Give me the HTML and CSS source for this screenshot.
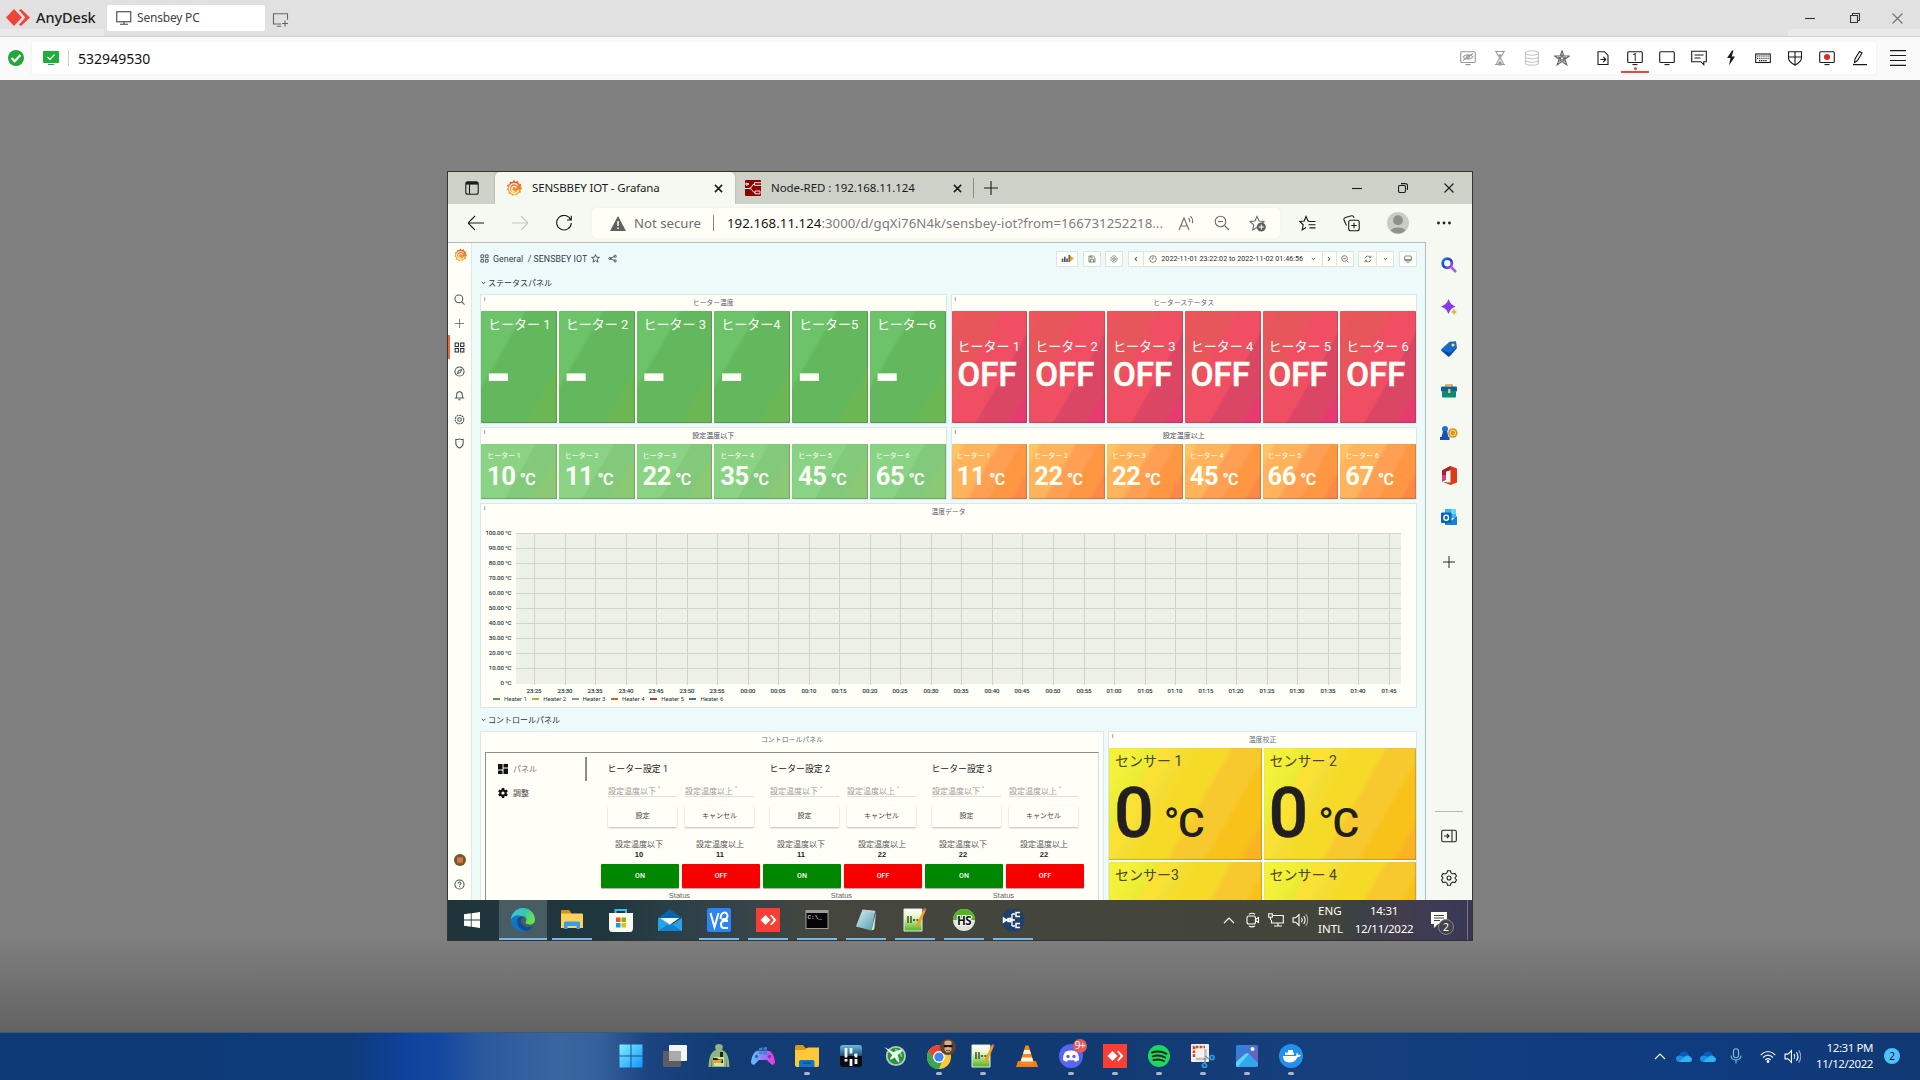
FILE: index.html
```
<!DOCTYPE html>
<html lang="en">
<head>
<meta charset="utf-8">
<title>AnyDesk</title>
<link rel="stylesheet" href="styles.css">
</head>
<body>
<svg class="sprite" aria-hidden="true">
  <defs>
    <linearGradient id="g-edge" x1="0" y1="0" x2="1" y2=".4"><stop offset="0" stop-color="#35c1f1"/><stop offset=".6" stop-color="#35c9b0"/><stop offset="1" stop-color="#6be14c"/></linearGradient>
    <linearGradient id="g-graf" x1="0" y1="0" x2="0" y2="1"><stop offset="0" stop-color="#e8552c"/><stop offset="1" stop-color="#fbb61c"/></linearGradient>
    <linearGradient id="g-win" x1="0" y1="0" x2="1" y2="1"><stop offset="0" stop-color="#7df0ff"/><stop offset="1" stop-color="#0f95ff"/></linearGradient>
    <linearGradient id="g-pad" x1="0" y1="0" x2="1" y2="0"><stop offset="0" stop-color="#5cc4ff"/><stop offset=".6" stop-color="#a070f5"/><stop offset="1" stop-color="#ff2fd8"/></linearGradient>
    <linearGradient id="g-photo" x1="0" y1="0" x2="1" y2="1"><stop offset="0" stop-color="#1f8be0"/><stop offset="1" stop-color="#8c4fb4"/></linearGradient>
    <linearGradient id="g-mag" x1="0" y1="0" x2="1" y2="1"><stop offset="0" stop-color="#1f7de0"/><stop offset=".5" stop-color="#1a3fc4"/><stop offset="1" stop-color="#b25cf0"/></linearGradient>
    <linearGradient id="g-npp" x1="0" y1="0" x2="0" y2="1"><stop offset="0" stop-color="#fff"/><stop offset=".35" stop-color="#e8f7c8"/><stop offset="1" stop-color="#4db51d"/></linearGradient>
    <linearGradient id="g-glass" x1="0" y1="0" x2="0" y2="1"><stop offset="0" stop-color="#6dbbe0"/><stop offset=".5" stop-color="#1c4d6c"/><stop offset=".52" stop-color="#05080b"/><stop offset="1" stop-color="#0a1016"/></linearGradient>
    <linearGradient id="g-pad2" x1="0" y1="0" x2="1" y2="1"><stop offset="0" stop-color="#d8eef2"/><stop offset="1" stop-color="#4f9cb4"/></linearGradient>
  </defs>
  <symbol id="i-min" viewBox="0 0 10 10"><path d="M0 5.500h10" class="s"/></symbol>
  <symbol id="i-x" viewBox="0 0 10 10"><path d="M.5.5l9 9M9.500.5l-9 9" class="s"/></symbol>
  <symbol id="i-xb" viewBox="0 0 10 10"><path d="M1 1l8 8M9 1l-8 8" fill="none" stroke="currentColor" stroke-width="1.700"/></symbol>
  <symbol id="i-restore" viewBox="0 0 10 10"><path d="M.5 2.500h7v7h-7zM2.500 2.500v-2h7v7h-2" class="s"/></symbol>
  <symbol id="i-restore-r" viewBox="0 0 10 10"><rect x=".5" y="2.500" width="7" height="7" rx="1.500" class="s"/><path d="M3 .6h4.500a2 2 0 0 1 2 2V7" class="s"/></symbol>
  <symbol id="i-plus" viewBox="0 0 14 14"><path d="M7 0v14M0 7h14" class="s"/></symbol>
  <symbol id="i-chev" viewBox="0 0 12 8"><path d="M1 7l5-5 5 5" class="s"/></symbol>
  <symbol id="i-chev-d" viewBox="0 0 6 4"><path d="M1 .8L3 2.800 5 .8" class="s"/></symbol>
  <symbol id="i-chev-l" viewBox="0 0 4 6"><path d="M3 1L1.200 3 3 5" class="s"/></symbol>
  <symbol id="i-chev-r" viewBox="0 0 4 6"><path d="M1 1l1.800 2L1 5" class="s"/></symbol>
  <symbol id="i-any" viewBox="0 0 24 17"><path d="M8 0l8 8.500-8 8.500-8-8.500z" fill="currentColor"/><path d="M13 1.200l2-1.200 9 8.500-9 8.500-2-1.200 6.300-7.300z" fill="currentColor"/></symbol>
  <symbol id="i-pc" viewBox="0 0 16 14"><rect x=".75" y=".75" width="14" height="10" class="s"/><path d="M8 11v2M4 13.200h8" class="s"/></symbol>
  <symbol id="i-pc-add" viewBox="0 0 17 14"><path d="M9 11H1.500V.7h14v6M5 13.300h4M13 7.500v6M10 10.500h6" class="s"/></symbol>
  <symbol id="i-mon" viewBox="0 0 16 16"><rect x=".7" y="1.700" width="14.600" height="10.800" rx="1" class="s"/><path d="M5.500 14.600h5" class="s"/></symbol>
  <symbol id="i-eye" viewBox="0 0 16 16"><rect x=".7" y="1.700" width="14.600" height="10.800" rx="1" class="s"/><path d="M5.500 14.600h5M3 7c2.500-3 7.500-3 10 0-2.500 3-7.500 3-10 0M3 10.500L13 3.500" class="s"/><circle cx="8" cy="7" r="1.500" class="s"/></symbol>
  <symbol id="i-hour" viewBox="0 0 16 16"><path d="M3 1.500h10M3 14.500h10M4.500 1.500c0 4 3 4.500 3 6.500s-3 3-3 6.500M11.500 1.500c0 4-3 4.500-3 6.500s3 3 3 6.500" class="s"/><path d="M6 4.500h4l-2 2.500zM5.500 14l2.500-3.500 2.500 3.500z" fill="currentColor"/><circle cx="8" cy="16" r="1.500" fill="#f7b5b0"/></symbol>
  <symbol id="i-db" viewBox="0 0 16 16"><ellipse cx="8" cy="3" rx="6.500" ry="2.200" class="s"/><path d="M1.500 3v10c0 3 13 3 13 0V3M1.500 6.500c0 3 13 3 13 0M1.500 10c0 3 13 3 13 0" class="s"/><circle cx="8" cy="16" r="1.500" fill="#f9c5c0"/></symbol>
  <symbol id="i-star" viewBox="0 0 16 16"><path d="M8 1l1.900 4.700 5.100.3-4 3.300 1.400 5.200L8 11.700l-4.400 2.800L5 9.300 1 6l5.100-.3z" fill="none" stroke="currentColor" stroke-width="1.500"/></symbol>
  <symbol id="i-star2" viewBox="0 0 16 16"><path d="M8 .8l1.800 5.200h5.700l-4.600 3.300 1.900 5.600L8 11.500l-4.800 3.400 1.900-5.600L.5 6h5.700zM8 5l.9 2.300 2.200.1-1.700 1.300.6 2.200-2-1.300-2 1.300.6-2.200-1.700-1.300 2.200-.1z" class="s"/></symbol>
  <symbol id="i-file" viewBox="0 0 16 16"><path d="M3 1.700h6.500L13 5.500v9H3zM5.500 9.500h5M8.300 7l2.500 2.500-2.500 2.500" class="s"/></symbol>
  <symbol id="i-chat" viewBox="0 0 16 16"><path d="M.7 1.200h14.600v10.500h-2.500v3l-3-3H.7zM3.500 5h9M3.500 8h6" class="s"/></symbol>
  <symbol id="i-bolt" viewBox="0 0 16 16"><path d="M9 .5L4 8h3.500L6 15.500 12 6.500H8.700L10.500.5z" fill="currentColor"/></symbol>
  <symbol id="i-kb" viewBox="0 0 16 16"><rect x=".7" y="4" width="14.600" height="8.500" class="s"/><path d="M2 6h12M2 8.300h12M4 10.600h8" stroke-dasharray="1.300 .8" class="s"/></symbol>
  <symbol id="i-shield" viewBox="0 0 16 16"><path d="M1.500 1.700h13v6c0 4-4 6-6.500 7.500C5.500 13.700 1.500 11.700 1.500 7.700zM8 1.700v13M1.500 7h13" class="s"/></symbol>
  <symbol id="i-rec" viewBox="0 0 16 16"><rect x=".7" y="1.700" width="14.600" height="10.800" rx="1" class="s"/><path d="M5.500 14.600h5" class="s"/><circle cx="8" cy="7" r="3" fill="#e9261c"/></symbol>
  <symbol id="i-pen" viewBox="0 0 16 16"><path d="M2 14.600h14M3.500 12.500l.5-3.500L8.500 1.500l2.500 1.500-4.500 7.500z" class="s"/></symbol>
  <symbol id="i-menu" viewBox="0 0 16 16"><path d="M0 .6h16M0 5.500h16M0 10.500h16M0 15.400h16" class="s"/></symbol>
  <symbol id="i-tabs" viewBox="0 0 14 14"><rect x=".8" y=".8" width="12.400" height="12.400" rx="2" class="s"/><path d="M1 2.300h12" stroke="currentColor" stroke-width="2.600"/><path d="M4.500 3v10" class="s"/></symbol>
  <symbol id="i-grafana" viewBox="0 0 16 16"><path d="M8 0l1.600 1.700L12 1l.7 2.400 2.500.5-.4 2.500L16 8.500l-1.500 1.800.2 2.500-2.500.3L11 15.500l-2.300-1L6.300 16 5 13.900l-2.500-.2.100-2.500L.7 9.600 2 7.500 1 5.100l2.400-.9L3.900 1.700l2.400.4z" fill="url(#g-graf)"/><path d="M12.600 10a4.800 4.800 0 1 1-.8-4.600" fill="none" stroke="#fff6ea" stroke-width="1.300"/><path d="M8.500 11.500a2.500 2.500 0 1 1 2-3.500" fill="none" stroke="#fff6ea" stroke-width="1.300"/></symbol>
  <symbol id="i-nodered" viewBox="0 0 16 16"><rect width="16" height="16" rx="1" fill="#8f0000"/><path d="M0 8.500h4c3.500 0 2.500-4.500 5.500-4.500M0 4h3M4 8.500c4 0 3 4 6 4" fill="none" stroke="#fff" stroke-width="1"/><path d="M9.500 2.700H16M9.500 2.700v2.600H16M1 3l3 1-3 1.500M10 11h5v2.800h-5z" fill="none" stroke="#fff" stroke-width=".9"/></symbol>
  <symbol id="i-back" viewBox="0 0 16 16"><path d="M0 8h16M7 1L0 8l7 7" class="s"/></symbol>
  <symbol id="i-fwd" viewBox="0 0 16 16"><path d="M0 8h16M9 1l7 7-7 7" class="s"/></symbol>
  <symbol id="i-reload" viewBox="0 0 16 16"><path d="M14.800 5A7.300 7.300 0 1 0 15.300 8M15.300.8V5h-4.300" class="s"/></symbol>
  <symbol id="i-warn" viewBox="0 0 16 15"><path d="M8 0l8 15H0z" fill="#5f6360"/><path d="M8 5v5M8 11.500v1.600" stroke="#fff" stroke-width="1.500"/></symbol>
  <symbol id="i-read" viewBox="0 0 16 16"><path d="M1 15L6 3l5 12M3 11h6.500M10.500 3.200q1.600 1.600 1.200 4M12.500 1.200q3 3 1.800 7" class="s"/></symbol>
  <symbol id="i-zoomout" viewBox="0 0 16 16"><circle cx="6.500" cy="6.500" r="5.300" class="s"/><path d="M10.500 10.500l4.500 4.500M4 6.500h5" class="s"/></symbol>
  <symbol id="i-zoomout-s" viewBox="0 0 12 12"><circle cx="5.300" cy="5.300" r="4.300" class="s"/><path d="M8.500 8.500l3 3M3.500 5.300h3.600" class="s"/></symbol>
  <symbol id="i-favadd" viewBox="0 0 17 16"><path d="M8 .9l2 4.600 5 .5-3.700 3.400 1 5L8 12l-4.300 2.400 1-5L1 6l5-.5z" class="s"/><circle cx="12.300" cy="11.500" r="4.500" fill="#5f6360"/><path d="M12.300 9v5M9.800 11.500h5" stroke="#fff"/></symbol>
  <symbol id="i-favs" viewBox="0 0 17 16"><path d="M10 5.500H9L7 1 5.200 5.500.8 6l3.400 3.300-1 5L7 12M9.500 6h7M9.500 9.200h7M10.500 12.400h6" class="s"/></symbol>
  <symbol id="i-coll" viewBox="0 0 17 17"><rect x="5.700" y="5.200" width="10.500" height="10.500" rx="2" class="s"/><path d="M11 7.700v5.500M8.200 10.500h5.500M3.500 10.500L1 5Q.5 3 2.500 2.500l6-1.700Q10.500.4 11 3" class="s"/></symbol>
  <symbol id="i-user" viewBox="0 0 22 22"><circle cx="11" cy="11" r="11" fill="#c9cbc6"/><circle cx="11" cy="8.300" r="5" fill="#8e908c"/><path d="M3.500 18.500a8 4.500 0 0 1 15 0A11 11 0 0 1 3.500 18.500" fill="#8e908c"/></symbol>
  <symbol id="i-dots" viewBox="0 0 14 4"><circle cx="1.500" cy="2" r="1.400"/><circle cx="7" cy="2" r="1.400"/><circle cx="12.500" cy="2" r="1.400"/></symbol>
  <symbol id="i-grid" viewBox="0 0 12 12"><path d="M1.200 1.200h3.600v3.600H1.200zM7.200 1.200h3.600v3.600H7.200zM1.200 7.200h3.600v3.600H1.200zM7.200 7.200h3.600v3.600H7.200z" class="s"/></symbol>
  <symbol id="i-share" viewBox="0 0 12 12"><path d="M3 6l6-3M3 6l6 3" class="s"/><circle cx="2.500" cy="6" r="1.500" class="s"/><circle cx="9.500" cy="3" r="1.500" class="s"/><circle cx="9.500" cy="9.200" r="1.500" class="s"/></symbol>
  <symbol id="i-search" viewBox="0 0 12 12"><circle cx="5.300" cy="5.300" r="4.300" class="s"/><path d="M8.500 8.500l3 3" class="s"/></symbol>
  <symbol id="i-compass" viewBox="0 0 12 12"><circle cx="6" cy="6" r="5" class="s"/><path d="M8.300 3.700L7 7 3.700 8.300 5 5z" class="s"/></symbol>
  <symbol id="i-bell" viewBox="0 0 12 12"><path d="M2 8.700c1-.7 1-2 1-3.700 0-4 6-4 6 0 0 1.700 0 3 1 3.700zM4.800 10.700h2.400M6 1v1" class="s"/></symbol>
  <symbol id="i-gear" viewBox="0 0 12 12"><circle cx="6" cy="6" r="4.700" class="s" stroke-dasharray="2.500 .5"/><circle cx="6" cy="6" r="2" class="s"/></symbol>
  <symbol id="i-guard" viewBox="0 0 12 12"><path d="M2 1.500q2.500.5 4-.5 1.500 1 4 .5V6c0 3-2.500 4.200-4 5C4.500 10.200 2 9 2 6z" class="s"/></symbol>
  <symbol id="i-help" viewBox="0 0 12 12"><circle cx="6" cy="6" r="5" class="s"/><path d="M4.500 4.800c0-2 3-2 3 0 0 1-1.500 1-1.500 2M6 8v1" class="s"/></symbol>
  <symbol id="i-clock" viewBox="0 0 12 12"><circle cx="6" cy="6" r="5" class="s"/><path d="M6 2.500V6H4" class="s"/></symbol>
  <symbol id="i-save" viewBox="0 0 12 12"><path d="M1.500 1.500h6.500l2.500 2.500v6.500h-9zM4 1.500v2.500h3M3.500 10.500v-4h5v4" class="s"/></symbol>
  <symbol id="i-sync" viewBox="0 0 12 12"><path d="M1.500 5a4.600 4.600 0 0 1 8.500-1M10.500 7a4.600 4.600 0 0 1-8.500 1M10.300 1v3H7.500M1.700 11V8h2.800" class="s"/></symbol>
  <symbol id="i-tv" viewBox="0 0 12 12"><rect x="1" y="1.500" width="10" height="7" rx="1" class="s"/><path d="M1 7h10M3.500 10.700h5" class="s"/></symbol>
  <symbol id="i-bars" viewBox="0 0 14 10"><path d="M1.500 5v4M4 3v6M6.500 5v4M9 1v8" stroke="#4a5358" stroke-width="1.800"/><path d="M9.500 1.500l4.500 3.500-4.500 3.500z" fill="#f29a33"/></symbol>
  <symbol id="i-dash" viewBox="0 0 10 10"><path d="M0 0h4.500v5.500H0zM5.500 0H10v3.500H5.500zM0 6.500h4.500V10H0zM5.500 4.500H10V10H5.500z"/></symbol>
  <symbol id="i-cog" viewBox="0 0 10 10"><path d="M5 0v10M.7 2.500l8.600 5M.7 7.500l8.600-5" stroke="currentColor" stroke-width="2.400"/><circle cx="5" cy="5" r="2.700" fill="none" stroke="currentColor" stroke-width="2"/><circle cx="5" cy="5" r="1.600" fill="#fffff8"/></symbol>
  <symbol id="i-mag" viewBox="0 0 16 16"><path d="M10 10l5 5" stroke="#a958ee" stroke-width="2.500"/><circle cx="6.300" cy="6.300" r="4.600" fill="none" stroke="url(#g-mag)" stroke-width="2.800"/></symbol>
  <symbol id="i-spark" viewBox="0 0 16 16"><path d="M7.500 0q1.800 5.700 7 7.500-5.200 1.800-7 7.500-1.800-5.700-7.500-7.500Q5.700 5.700 7.500 0z" fill="#8a3be8"/><path d="M13 9.500q.7 2.800 3 3.500-2.300.7-3 3-.7-2.300-3-3 2.300-.7 3-3.500z" fill="#e6b320"/></symbol>
  <symbol id="i-tag" viewBox="0 0 16 16"><path d="M8.500.8l6.500-.6 1 6.800-7 8.200q-1 .8-2 0L.5 10q-1-1 0-2z" fill="#1469c9"/><path d="M.3 9l7.200 6.800L16 7l-7 5z" fill="#0b47a0"/><circle cx="12" cy="4" r="1.600" fill="#ffe24d"/></symbol>
  <symbol id="i-tool" viewBox="0 0 16 16"><path d="M5 4V2h6v2" fill="none" stroke="#d8a22a" stroke-width="1.600"/><rect y="3.500" width="16" height="5" rx="1" fill="#0f5fa8"/><rect x="1" y="8" width="14" height="6.500" rx="1" fill="#0b8c72"/><rect x="7" y="6" width="2.500" height="4" fill="#f4c542"/></symbol>
  <symbol id="i-games" viewBox="0 0 18 16"><circle cx="5" cy="4" r="3" fill="#1f6fd8"/><path d="M3 6h4l1.500 6h1v3H0v-3h1.500z" fill="#1452b8"/><circle cx="12.800" cy="8" r="4.800" fill="#d9961e"/><circle cx="12.800" cy="8" r="2.800" fill="none" stroke="#ffe08a"/></symbol>
  <symbol id="i-office" viewBox="0 0 16 19"><path d="M9.500 0L16 2.500v14L9.500 19 2 16l7.500.5V4L5 5.500v8L1 15.500V4.500z" fill="#dc3a12"/><path d="M9.500 0L1 4.500v11l4-2v-8L9.500 4z" fill="#a8202e"/><path d="M1 9v6.500l4-2V9z" fill="#d2418a"/></symbol>
  <symbol id="i-outlook" viewBox="0 0 16 16"><path d="M4 0h11v9H4z" fill="#35b8f1"/><path d="M10 0h5v5h-5z" fill="#63daf9"/><path d="M4 8l6 4 6-5v9H4z" fill="#1383d8"/><rect y="3.500" width="10.500" height="10.500" rx="1" fill="#0b63bd"/><ellipse cx="5.200" cy="8.700" rx="2.300" ry="2.600" fill="none" stroke="#fff" stroke-width="1.400"/></symbol>
  <symbol id="i-panel" viewBox="0 0 16 13"><rect x=".7" y=".7" width="14.600" height="11.600" rx="1.500" class="s"/><path d="M11 1v11M3 6.500h5M6 4.500l2 2-2 2" class="s"/></symbol>
  <symbol id="i-gear2" viewBox="0 0 16 16"><path d="M6.500.8h3l.6 2.200 1.700 1 2.200-.6 1.500 2.600L13.900 8l1.600 2-1.500 2.600-2.200-.6-1.700 1-.6 2.200h-3L5.900 13l-1.700-1-2.200.6L.5 10l1.600-2L.5 6 2 3.400l2.200.6 1.700-1z" class="s"/><circle cx="8" cy="8" r="2" class="s"/></symbol>
  <symbol id="i-win10" viewBox="0 0 16 16"><path d="M0 2.300L6.800 1.300V7.600H0zM7.600 1.200L16 0v7.600H7.600zM0 8.400h6.800v6.300L0 13.700zM7.600 8.400H16V16l-8.400-1.200z" fill="#fffffa"/></symbol>
  <symbol id="i-edge" viewBox="0 0 24 24"><path d="M24 12c0 3-2.500 4.500-5 4.500s-4.500-.8-4.500-2 1-1.200 1-2.800c0-2-2-3.700-5-3.700C5 8 1.500 11 0 12 0 5 5.500 0 12 0s12 5 12 12z" fill="url(#g-edge)"/><path d="M0 12C1 8.500 5 7 9 7.300 6 9 5 12 6.500 16.500s6 7 9 6.500A12 12 0 0 1 0 12z" fill="#1176c9"/><path d="M9.500 8.500C6 10 5.500 14 7.500 18s6 5 9 5c3-1.500 4.500-3 5.500-4.800-5 2.300-12-.2-12-5.200 0-2 1.500-3 2-3.500q-1-1-2.500-1z" fill="#0b4f9e"/></symbol>
  <symbol id="i-folder" viewBox="0 0 22 20"><path d="M0 1q0-1 1-1h7l2 2.500V7H0z" fill="#d39217"/><path d="M0 3.500h21q1 0 1 1V18H0z" fill="#fbd25b"/><path d="M3 19v-6q0-1.500 1.500-1.500h13Q19 11.500 19 13v6h-3.500v-3h-9v3z" fill="#3c9be6"/></symbol>
  <symbol id="i-folder11" viewBox="0 0 24 22"><path d="M0 1.500Q0 0 1.500 0H8l2.500 3H22v5H0z" fill="#d99a13"/><path d="M0 5h10l3-2.500h11V20q0 2-2 2H2q-2 0-2-2z" fill="#fdc83c"/><path d="M4 22v-5q0-2 2-2h11.500q2 0 2 2v5z" fill="#1274c4"/><path d="M8 18h8" stroke="#0a4f90" stroke-width="1.500"/></symbol>
  <symbol id="i-store" viewBox="0 0 24 24"><path d="M6.500 6V2h10.500v4" fill="none" stroke="#3fbbf0" stroke-width="2"/><path d="M0 5h24v15q0 4-3 4H3q-3 0-3-4z" fill="#f8fbf4"/><path d="M7 9.500h4.500V14H7z" fill="#f1511b"/><path d="M12.500 9.500H17V14h-4.500z" fill="#80b900"/><path d="M7 15h4.500v4.500H7z" fill="#01a4ee"/><path d="M12.500 15H17v4.500h-4.500z" fill="#fbb903"/></symbol>
  <symbol id="i-mail" viewBox="0 0 24 22"><path d="M0 9L12 0l12 9z" fill="#0a63ad"/><path d="M0 9l12 7.500L24 9v13H0z" fill="#28a3ea"/><path d="M0 22l12-8 12 8z" fill="#1382cf"/><path d="M0 9l12 7.500V14l-8-5z" fill="#4bc1f7"/><path d="M2.500 9h19L12 15.500z" fill="#f4f7f5"/></symbol>
  <symbol id="i-vnc" viewBox="0 0 24 24"><rect width="24" height="24" rx="2" fill="#2b84f3"/><path d="M3.500 5l4 14 4-14M13.500 11c0-8 7-8 7-3 0 3-2.500 3.500-6 3.500h6M21 20h-4c-4 0-4-7 0-7h4" fill="none" stroke="#fff" stroke-width="2"/></symbol>
  <symbol id="i-anyb" viewBox="0 0 24 24"><rect width="24" height="24" fill="#fb3e35"/><path d="M9.500 7l5 5-5 5-5-5zM14 7.500l1.500-.8 5 5.300-5 5.300-1.500-.8 3.700-4.500z" fill="#fff"/></symbol>
  <symbol id="i-note" viewBox="0 0 24 24"><path d="M8 1l14 1.500-4 21L1 19z" fill="url(#g-pad2)"/><path d="M23 3l-2 19-3 1.500z" fill="#e6e6dc"/><path d="M8 1.500l14 1.500" stroke="#c7ccd0" stroke-width="2"/></symbol>
  <symbol id="i-npp" viewBox="0 0 24 24"><path d="M1 1h18v22H1z" fill="url(#g-npp)" stroke="#e7eae4"/><path d="M5 8v7M8 8v7M10 12h2M13.500 12h2" stroke="#2a331c" stroke-width="1.300"/><path d="M21 1l2 1-7 16-3 2 .5-4z" fill="#f0a122"/><path d="M21 0l2.500 1-1 2-2-1z" fill="#d9606a"/></symbol>
  <symbol id="i-nodes" viewBox="0 0 24 24"><circle cx="12" cy="12" r="11.500" fill="#22406c"/><path d="M3 12h8M11 6v12M11 6h3M11 12h3M11 18h3" stroke="#fff" stroke-width="1.300" fill="none"/><path d="M19 4.500h-4v4h4M19 15.500h-4v4h4M2.500 10l3 2-3 2zM7 10.500h3v3H7z" fill="none" stroke="#fff" stroke-width="1.500"/></symbol>
  <symbol id="i-meet" viewBox="0 0 14 16"><rect x="1" y="4" width="8.500" height="8" rx="2" class="s"/><path d="M9.500 7.500l3-2v5l-3-2M3 2.200q3-1.800 6 0M3 14q3 1.800 6 0" class="s"/></symbol>
  <symbol id="i-net" viewBox="0 0 16 14"><path d="M5 2.500h10.300v7.500H3.500V7M10 10v2.500M6 13h8M.7.700h3.600v3.600H.7zM2.500 4.500V7" class="s"/></symbol>
  <symbol id="i-vol" viewBox="0 0 16 14"><path d="M1 4.800h2.700L7 1.500v11L3.700 9.200H1zM9.500 4.800q1.500 2.200 0 4.400M11.700 3q2.800 4 0 8" class="s"/><path d="M13.800 1.200q4 5.800 0 11.600" class="s" opacity=".55"/></symbol>
  <symbol id="i-notif" viewBox="0 0 16 16"><path d="M0 0h16v12H7l-4 4v-4H0z" fill="#fffffa"/><path d="M3 3.500h10M3 6h10M3 8.500h6" stroke="#423f4c"/></symbol>
  <symbol id="i-win11" viewBox="0 0 24 24"><path d="M.5.5h11v11H.5zM12.500.5h11v11h-11zM.5 12.500h11v11H.5zM12.500 12.500h11v11h-11z" fill="url(#g-win)"/></symbol>
  <symbol id="i-task" viewBox="0 0 24 22"><rect x="6" width="18" height="16" rx="1" fill="#f3f4f6"/><rect y="6" width="18" height="16" rx="1" fill="#5c5e62"/><path d="M6 6h12v10H6z" fill="#a9abad"/></symbol>
  <symbol id="i-alien" viewBox="0 0 22 24"><path d="M11 0c5 0 4 4 3 6 4 1 7 5 7.500 17h-3L18 14v9H4v-9l-.5 9h-3C1 11 4 7 8 6 7 4 6 0 11 0z" fill="#8fb585"/><path d="M6 13h10v9H6z" fill="#cfe4a4"/><path d="M5 14h4l1.500 1.500H15V19H5zM12 8v5h3V8z" fill="#20251c"/><path d="M5 16h9l-1 3H5z" fill="#f2a31c"/></symbol>
  <symbol id="i-pad" viewBox="0 0 24 18"><path d="M4 5q2-2 5-1h6q3-1 5 1 3 3 4 9.500-.5 4-3.500 3L16 13H8l-4.500 4.500q-3 1-3.500-3Q1 8 4 5z" fill="url(#g-pad)"/><path d="M8 1l3.500-.5V3.500H8zM12.500.4L16 0v3.500h-3.500zM8 4.500h3.500v2.800L8 7zM12.500 4.500H16V8l-3.500-.6z" fill="#3e7fd0"/><circle cx="5.500" cy="9.500" r="1.700" fill="#3766b8"/><circle cx="18.500" cy="9.500" r="1.700" fill="#7d38b8"/></symbol>
  <symbol id="i-mm" viewBox="0 0 22 22"><rect width="22" height="22" rx="3" fill="url(#g-glass)"/><path d="M6 3v9.500M11 3v5.500M16 8.500v4M6 14v2.500M11 14v7M16 14v5" stroke="#f2f5f7" stroke-width="2.800"/><circle cx="15" cy="10" r="1" fill="#fff"/></symbol>
  <symbol id="i-jet" viewBox="0 0 24 24"><circle cx="13" cy="12" r="9.500" fill="#209636"/><circle cx="13" cy="12" r="10" fill="none" stroke="#b9c4c4" stroke-width="2"/><path d="M12 5q6 1 7 8" fill="none" stroke="#5fe07a" stroke-width="2"/><path d="M0 2l10 5.500L19 5l1.500 1-5.500 5 2 7-1.500 1-4-5.500-4 2.500-1-1 2.500-4z" fill="#f0f5f0"/></symbol>
  <symbol id="i-chrome" viewBox="0 0 26 28"><circle cx="12" cy="16" r="12" fill="#fcc934"/><path d="M12 4a12 12 0 0 1 10.400 6H12a6 6 0 0 0-5.200 9L1.600 10A12 12 0 0 1 12 4z" fill="#ea4335"/><path d="M1.600 10l5.200 9a6 6 0 0 0 7.800 2.400L12 28A12 12 0 0 1 1.600 10z" fill="#34a853"/><circle cx="12" cy="16" r="5.800" fill="#fff"/><circle cx="12" cy="16" r="4.600" fill="#4285f4"/></symbol>
  <symbol id="i-face" viewBox="0 0 16 16"><circle cx="8" cy="8" r="8" fill="#5b4532"/><path d="M4.500 2.500q3.500-2 7 0V11q-3.500 5-7 0z" fill="#d9ab88"/><path d="M4 6h8.500v2.300H9L8 7.500l-1 .8H4z" fill="#15110f"/><path d="M6 11.500h4" stroke="#7a4a34"/></symbol>
  <symbol id="i-vlc" viewBox="0 0 22 24"><path d="M2 17h18l2 6H0z" fill="#f08010"/><path d="M9.500 1.500h3L18 19q-7 3-14 0z" fill="#f68b12"/><path d="M8.300 6h5.400l1.300 4H7zM6 13.500h10l1.300 4H4.700z" fill="#f4f4f2"/></symbol>
  <symbol id="i-discord" viewBox="0 0 24 24"><circle cx="12" cy="12" r="12" fill="#5865f2"/><path d="M6 8q3-2 6-1.500Q15 6 18 8q2.500 4 2 8-2 1.500-4 1.800l-1-1.500H9l-1 1.500q-2-.3-4-1.800-.5-4 2-8z" fill="#fff"/><circle cx="9" cy="12.500" r="1.700" fill="#5865f2"/><circle cx="15" cy="12.500" r="1.700" fill="#5865f2"/></symbol>
  <symbol id="i-spotify" viewBox="0 0 22 22"><circle cx="11" cy="11" r="11" fill="#1ed760"/><path d="M4 7.500q7.500-2.500 14.500 1.300M4.800 11.300q6.500-2 12.400 1.200M5.500 15q5.500-1.500 10.400 1" fill="none" stroke="#10251a" stroke-width="1.900" stroke-linecap="round"/></symbol>
  <symbol id="i-snip" viewBox="0 0 24 24"><rect width="18" height="18" rx="1" fill="#f1f1ef"/><path d="M3 13V3h11" fill="none" stroke="#d8461c" stroke-width="2.600" stroke-dasharray="2.700 1.200"/><path d="M5 15h9.500V5" fill="none" stroke="#bdbfc0" stroke-width="2.500"/><path d="M14 12l4 3M14 14l0 5" stroke="#8a9196" stroke-width="1.500"/><circle cx="21" cy="13.500" r="2" fill="none" stroke="#27a0ea" stroke-width="1.700"/><circle cx="13.500" cy="21.500" r="2" fill="none" stroke="#27a0ea" stroke-width="1.700"/></symbol>
  <symbol id="i-photo" viewBox="0 0 22 22"><rect width="22" height="22" rx="2" fill="url(#g-photo)"/><path d="M0 18L9 9q2-1.500 4 0l9 9v2q0 2-2 2H2q-2 0-2-2z" fill="#2fa9ee"/><path d="M0 17l9-8q2-1.500 4 0L4 19l-2 3q-2 0-2-2z" fill="#5fd3fa"/><circle cx="16.500" cy="4" r="2" fill="#e9f7ff"/></symbol>
  <symbol id="i-docker" viewBox="0 0 24 24"><circle cx="12" cy="12" r="12" fill="#2191ee"/><path d="M4 12h13q1-2 .5-3.500 1.500.7 1.700 2.500 1.500-.5 2.800.3-1 2-3.500 2-2.500 5.200-8 5.200Q4 18.500 4 12zM6 8.500h9V11H6zM9 6h5v2.500H9z" fill="#fff"/></symbol>
  <symbol id="i-cloud" viewBox="0 0 16 11"><path d="M3 5q1-4 5-4.500Q12 .3 13 4.500l-5 3z" fill="#0b5cb8"/><path d="M0 7.500Q0 4.500 3.500 4.500L16 8q0 3-3 3H3.500Q0 11 0 7.500z" fill="#1a8fe0"/><path d="M4 10.500q2-3 5-5 3-2 5 0 2 1 2 2.700Q15.500 11 13 11H3z" fill="#2fb3f7"/></symbol>
  <symbol id="i-mic" viewBox="0 0 12 16"><rect x="3.500" y=".7" width="5" height="9" rx="2.500" class="s"/><path d="M1 7.500c0 6 10 6 10 0M6 12v3.500" class="s"/></symbol>
  <symbol id="i-wifi" viewBox="0 0 16 13"><path d="M.7 5q7.300-7 14.600 0M3 7.500q5-4.700 10 0M5.300 9.800q2.700-2.400 5.400 0" class="s"/><circle cx="8" cy="11.500" r="1.400" fill="currentColor"/></symbol>
</svg>

<header class="titlebar">
  <div class="strip strip-l"></div><div class="strip strip-r"></div>
  <svg class="brand-mark"><use href="#i-any"/></svg>
  <span class="brand">AnyDesk</span>
  <div class="session-tab"><svg class="w16x14"><use href="#i-pc"/></svg><span>Sensbey PC</span></div>
  <svg class="new-tab"><use href="#i-pc-add"/></svg>
  <div class="win-btns"><svg><use href="#i-min"/></svg><svg><use href="#i-restore"/></svg><svg class="close"><use href="#i-x"/></svg></div>
</header>

<div class="addressbar">
  <svg class="ok" viewBox="0 0 16 16"><circle cx="8" cy="8" r="8" fill="#22a73a"/><path d="M3.500 8l3.200 3.200L12.500 5" fill="none" stroke="#fff" stroke-width="2.200"/></svg>
  <div class="address">
    <svg class="online" viewBox="0 0 16 14"><rect width="16" height="12" rx="1" fill="#1fae37"/><path d="M5 13.500h6" stroke="#1fae37"/><path d="M4.500 6l2.500 2.500L11.500 3.500" fill="none" stroke="#fff" stroke-width="1.200"/></svg>
    <i class="bar"></i><span class="id">532949530</span>
    <div class="tools">
      <svg class="dim"><use href="#i-eye"/></svg><svg class="dim"><use href="#i-hour"/></svg><svg class="dimmer"><use href="#i-db"/></svg><svg class="mid"><use href="#i-star2"/></svg>
      <svg class="first"><use href="#i-file"/></svg>
      <div class="active-tool"><svg><use href="#i-mon"/></svg><b>1</b></div>
      <svg><use href="#i-mon"/></svg><svg><use href="#i-chat"/></svg><svg><use href="#i-bolt"/></svg><svg><use href="#i-kb"/></svg><svg><use href="#i-shield"/></svg><svg><use href="#i-rec"/></svg><svg><use href="#i-pen"/></svg>
    </div>
  </div>
  <svg class="burger"><use href="#i-menu"/></svg>
</div>

<main class="remote">
<section class="desktop">
  <div class="tabstrip">
    <div class="tab-actions"><svg class="sq14"><use href="#i-tabs"/></svg></div>
    <div class="tab active"><svg class="sq16"><use href="#i-grafana"/></svg><span class="t1">SENSBBEY IOT - Grafana</span><svg class="sq8"><use href="#i-xb"/></svg></div>
    <div class="tab"><svg class="sq16"><use href="#i-nodered"/></svg><span class="t2">Node-RED : 192.168.11.124</span><svg class="sq8"><use href="#i-xb"/></svg></div>
    <i class="tab-sep"></i>
    <svg class="sq14 tab-new"><use href="#i-plus"/></svg>
    <div class="edge-btns"><svg><use href="#i-min"/></svg><svg><use href="#i-restore-r"/></svg><svg><use href="#i-x"/></svg></div>
  </div>
  <div class="navbar">
    <svg class="sq16 nav-back"><use href="#i-back"/></svg><svg class="sq16 nav-fwd"><use href="#i-fwd"/></svg><svg class="sq16 nav-reload"><use href="#i-reload"/></svg>
    <div class="omnibox">
      <svg class="warn"><use href="#i-warn"/></svg><span class="insecure">Not secure</span><i class="omni-sep"></i>
      <span class="url"><b>192.168.11.124</b>:3000/d/gqXi76N4k/sensbey-iot?from=166731252218...</span>
      <div class="omni-icons"><svg><use href="#i-read"/></svg><svg><use href="#i-zoomout"/></svg><svg class="w17"><use href="#i-favadd"/></svg></div>
    </div>
    <div class="nav-icons"><svg class="w17"><use href="#i-favs"/></svg><svg class="w17"><use href="#i-coll"/></svg><svg class="avatar"><use href="#i-user"/></svg><svg class="dots"><use href="#i-dots"/></svg></div>
  </div>

  <div class="page-row">
    <div class="grafana">
      <nav class="g-side">
        <svg class="g-logo"><use href="#i-grafana"/></svg>
        <div class="g-items">
          <span><svg><use href="#i-search"/></svg></span><span><svg class="thin"><use href="#i-plus"/></svg></span><span class="on"><svg><use href="#i-grid"/></svg></span><span><svg><use href="#i-compass"/></svg></span><span><svg><use href="#i-bell"/></svg></span><span><svg><use href="#i-gear"/></svg></span><span><svg><use href="#i-guard"/></svg></span>
        </div>
        <div class="g-bottom">
          <span><svg class="g-ava" viewBox="0 0 12 12"><circle cx="6" cy="6" r="6" fill="#6b5a22"/><path d="M3 2l1.500 2L6 2.500 7.500 4 9 2v8L7.500 8 6 10 4.500 8 3 10z" fill="#e0705a"/></svg></span>
          <span><svg><use href="#i-help"/></svg></span>
        </div>
      </nav>
      <div class="g-main">
        <div class="g-head">
          <svg class="sq9"><use href="#i-grid"/></svg><span class="crumb">General&nbsp; / SENSBEY IOT</span><svg class="sq9 g-star"><use href="#i-star"/></svg><svg class="sq9"><use href="#i-share"/></svg>
          <div class="g-tools">
            <div class="gb w21"><svg class="bars"><use href="#i-bars"/></svg></div>
            <div class="gb w18"><svg><use href="#i-save"/></svg></div>
            <div class="gb w18"><svg><use href="#i-gear"/></svg></div>
            <div class="gb range"><span class="c14"><svg class="arrow"><use href="#i-chev-l"/></svg></span><span class="time"><svg><use href="#i-clock"/></svg><em>2022-11-01 23:22:02 to 2022-11-02 01:46:56</em><svg class="down"><use href="#i-chev-d"/></svg></span><span class="c14"><svg class="arrow"><use href="#i-chev-r"/></svg></span><span class="c18"><svg><use href="#i-zoomout-s"/></svg></span></div>
            <div class="gb sync"><span class="c18"><svg><use href="#i-sync"/></svg></span><span class="c16"><svg class="down"><use href="#i-chev-d"/></svg></span></div>
            <div class="gb w18"><svg><use href="#i-tv"/></svg></div>
          </div>
        </div>
        <div class="row-title"><svg><use href="#i-chev-d"/></svg>ステータスパネル</div>
        <div class="row r1">
          <div class="panel half"><div class="ph"><i>i</i>ヒーター温度</div><div class="tiles" id="heat"></div></div>
          <div class="panel half"><div class="ph"><i>i</i>ヒーターステータス</div><div class="tiles" id="status"></div></div>
        </div>
        <div class="row r2">
          <div class="panel half"><div class="ph big"><i>i</i>設定温度以下</div><div class="tiles" id="low"></div></div>
          <div class="panel half"><div class="ph big"><i>i</i>設定温度以上</div><div class="tiles" id="high"></div></div>
        </div>
        <div class="row r3">
          <div class="panel full"><div class="ph"><i>i</i>温度データ</div><svg id="chart" class="chart"></svg>
            <div class="legend" id="legend"></div></div>
        </div>
        <div class="row-title second"><svg><use href="#i-chev-d"/></svg>コントロールパネル</div>
        <div class="row r4">
          <div class="panel control"><div class="ph teal">コントロールパネル</div>
            <div class="frame">
              <div class="menu"><div class="cur"><svg><use href="#i-dash"/></svg>パネル</div><div><svg><use href="#i-cog"/></svg>調整</div></div>
              <div class="groups" id="groups"></div>
            </div>
          </div>
          <div class="panel sensors"><div class="ph teal"><i>i</i>温度校正</div><div class="sgrid" id="sensors"></div></div>
        </div>
      </div>
    </div>
    <aside class="edge-side">
      <span><svg><use href="#i-mag"/></svg></span><span><svg><use href="#i-spark"/></svg></span><span><svg><use href="#i-tag"/></svg></span><span><svg><use href="#i-tool"/></svg></span><span><svg class="w18i"><use href="#i-games"/></svg></span><span><svg class="tall"><use href="#i-office"/></svg></span><span><svg><use href="#i-outlook"/></svg></span><span class="add"><svg class="p12"><use href="#i-plus"/></svg></span>
      <div class="side-end"><span><svg class="blk"><use href="#i-panel"/></svg></span><span><svg class="blk"><use href="#i-gear2"/></svg></span></div>
    </aside>
  </div>

  <footer class="tb10">
    <div class="tb-items">
      <span><svg class="sq16"><use href="#i-win10"/></svg></span>
      <span class="sel"><svg><use href="#i-edge"/></svg></span>
      <span class="run"><svg class="f22"><use href="#i-folder"/></svg></span>
      <span><svg><use href="#i-store"/></svg></span>
      <span><svg><use href="#i-mail"/></svg></span>
      <span class="run"><svg><use href="#i-vnc"/></svg></span>
      <span class="run"><svg><use href="#i-anyb"/></svg></span>
      <span class="run"><svg viewBox="0 0 24 24"><rect x=".5" y="2" width="23" height="19" fill="#9a9ea0"/><rect x="1.500" y="5" width="21" height="15" fill="#050505"/><text x="2.500" y="11" class="prompt">C:\_</text></svg></span>
      <span class="run"><svg class="f22"><use href="#i-note"/></svg></span>
      <span class="run"><svg><use href="#i-npp"/></svg></span>
      <span class="run"><svg viewBox="0 0 24 24"><circle cx="12" cy="12" r="11" fill="#dfe3da"/><path d="M1 12a11 11 0 0 1 22 0z" fill="#53b326"/><text x="12" y="16.500" class="hs">HS</text></svg></span>
      <span class="run"><svg><use href="#i-nodes"/></svg></span>
    </div>
    <div class="tb-tray">
      <svg class="c12"><use href="#i-chev"/></svg><svg class="c14s"><use href="#i-meet"/></svg><svg class="sq16"><use href="#i-net"/></svg><svg class="sq16 vol"><use href="#i-vol"/></svg>
      <div class="lang">ENG<br>INTL</div><div class="dt">14:31<br>12/11/2022</div>
      <div class="notif"><svg class="sq16"><use href="#i-notif"/></svg><b>2</b></div><i class="peek"></i>
    </div>
  </footer>
</section>
</main>

<footer class="tb11">
  <div class="dock">
    <span><svg><use href="#i-win11"/></svg></span>
    <span><svg><use href="#i-task"/></svg></span>
    <span><svg><use href="#i-alien"/></svg></span>
    <span><svg><use href="#i-pad"/></svg></span>
    <span class="run"><svg><use href="#i-folder11"/></svg></span>
    <span><svg class="s22"><use href="#i-mm"/></svg></span>
    <span><svg class="s22"><use href="#i-jet"/></svg></span>
    <span class="run"><svg class="chrome"><use href="#i-chrome"/></svg><svg class="face"><use href="#i-face"/></svg></span>
    <span class="run"><svg><use href="#i-npp"/></svg></span>
    <span><svg><use href="#i-vlc"/></svg></span>
    <span class="run"><svg><use href="#i-discord"/></svg><b>9+</b></span>
    <span class="run"><svg><use href="#i-anyb"/></svg></span>
    <span class="run"><svg class="s22"><use href="#i-spotify"/></svg></span>
    <span class="run"><svg><use href="#i-snip"/></svg></span>
    <span class="run"><svg class="s22"><use href="#i-photo"/></svg></span>
    <span class="run"><svg><use href="#i-docker"/></svg></span>
  </div>
  <div class="tray11">
    <svg class="c12"><use href="#i-chev"/></svg><svg class="cl"><use href="#i-cloud"/></svg><svg class="cl cl2"><use href="#i-cloud"/></svg><svg class="mic"><use href="#i-mic"/></svg><svg class="wifi"><use href="#i-wifi"/></svg><svg class="v11"><use href="#i-vol"/></svg>
    <div class="clock11">12:31 PM<br>11/12/2022</div><b class="count">2</b>
  </div>
</footer>
<script src="app.js"></script>
</body>
</html>
```
FILE: app.js
```
const $ = id => document.getElementById(id);

const tile = (cls, label, value, unit) =>
  `<div class="tile ${cls}"><span class="tl">${label}</span>${value === '' ? '' : `<span class="tv">${value}${unit ? `<small>${unit}</small>` : ''}</span>`}</div>`;

$('heat').innerHTML = ['ヒーター 1', 'ヒーター 2', 'ヒーター 3', 'ヒーター4', 'ヒーター5', 'ヒーター6'].map(l => tile('green', l, '-')).join('');
$('status').innerHTML = [1, 2, 3, 4, 5, 6].map(n => tile('red', 'ヒーター ' + n, 'OFF')).join('');
$('low').innerHTML = [10, 11, 22, 35, 45, 65].map((v, i) => tile('lime', 'ヒーター ' + (i + 1), v, '°C')).join('');
$('high').innerHTML = [11, 22, 22, 45, 66, 67].map((v, i) => tile('orange', 'ヒーター ' + (i + 1), v, '°C')).join('');
$('sensors').innerHTML = [['センサー 1', '0'], ['センサー 2', '0'], ['センサー3', ''], ['センサー 4', '']].map(([l, v]) => tile('yellow', l, v, '°C')).join('');

/* temperature chart: 5-minute ticks, 10-degree lines */
let s = '<rect x="35" y="13" width="885" height="151" fill="#eef1e8"/>';
for (let i = 0; i <= 10; i++) {
  const y = 13.5 + i * 15;
  if (i < 10) s += `<path class="gl" d="M35 ${y}H920"/>`;
  s += `<text x="30.500" y="${y + 1.5}" text-anchor="end">${i === 10 ? '0' : (100 - i * 10) + '.00'} °C</text>`;
}
for (let i = 0; i < 29; i++) {
  const x = Math.round(53 + i * 30.53) + 0.5;
  const m = 23 * 60 + 25 + i * 5;
  const t = String(Math.floor(m / 60) % 24).padStart(2, '0') + ':' + String(m % 60).padStart(2, '0');
  s += `<path class="gl" d="M${x} 13V165"/><text x="${x - 0.5}" y="173" text-anchor="middle">${t}</text>`;
}
$('chart').innerHTML = s;
$('legend').innerHTML = ['#5f9a50', '#c2a83a', '#6f9ad6', '#c0692e', '#b33a5e', '#3f74b8']
  .map((c, i) => `<span><i style="background:${c}"></i>Heater ${i + 1}</span>`).join('');

/* heater control groups */
$('groups').innerHTML = [[10, 11], [11, 22], [22, 22]].map(([lo, hi], i) => `
<div class="group"><h4>ヒーター設定 ${i + 1}</h4>
<div class="pair in"><label>設定温度以下 <sup>*</sup></label><label>設定温度以上 <sup>*</sup></label></div>
<div class="pair btn"><button>設定</button><button class="cancel">キャンセル</button></div>
<div class="pair val"><div>設定温度以下<b>${lo}</b></div><div>設定温度以上<b>${hi}</b></div></div>
<div class="pair sw"><button class="on">ON</button><button class="off">OFF</button></div>
<div class="st">Status</div></div>`).join('');
```
FILE: styles.css
```
* { box-sizing: border-box; }
body { margin: 0; width: 1920px; height: 1080px; overflow: hidden; display: flex; flex-direction: column; background: #808080; font-family: "Noto Sans", "Noto Sans CJK JP", sans-serif; color: #1b1b1b; }
svg { display: block; flex: none; fill: currentColor; }
.sprite { position: absolute; width: 0; height: 0; }
.s { fill: none; stroke: currentColor; stroke-width: 1.1px; }
i, em { font-style: normal; }
button { font: inherit; border: 0; padding: 0; background: none; color: inherit; }

/* AnyDesk title bar */
.titlebar { position: relative; height: 37px; background: #e1e1e1; border-bottom: 1px solid #cfcfcf; display: flex; align-items: flex-start; flex: none; }
.strip { position: absolute; top: 29px; height: 7px; background: #e9e9e9; }
.strip-l { left: 0; width: 104px; }
.strip-r { right: 0; width: 132px; }
.brand-mark { width: 24px; height: 17px; margin: 9px 0 0 6px; color: #ef4438; }
.brand { width: 71px; padding-left: 6px; margin-top: 7px; font-size: 14.500px; line-height: 21px; font-weight: 500; color: #222; letter-spacing: -.1px; white-space: nowrap; }
.session-tab { margin: 5px 0 0 6px; width: 158px; height: 26px; background: #fff; border-radius: 2px; display: flex; align-items: center; gap: 5px; padding: 0 0 1px 9px; font-size: 12px; letter-spacing: -.2px; color: #444; }
.w16x14 { width: 16px; height: 14px; }
.new-tab { width: 17px; height: 14px; margin: 13px 0 0 7px; color: #666; }
.win-btns { margin: 13px 17px 0 auto; display: flex; gap: 35px; color: #333; }
.win-btns svg { width: 10px; height: 10px; }
.win-btns .close { color: #777; margin-left: -3px; width: 11px; height: 11px; }

/* AnyDesk address bar */
.addressbar { height: 43px; flex: none; background: #fafafa; display: flex; align-items: center; padding: 0 14px 0 8px; }
.ok { width: 16px; height: 16px; margin-top: -1px; }
.address { margin: -1px 14px 0 8px; height: 32px; flex: 1; background: #fff; border-radius: 2px; box-shadow: 0 0 0 1.500px #f5f5f5; display: flex; align-items: center; padding-left: 11px; }
.online { width: 16px; height: 14px; }
.bar { width: 1px; height: 16px; background: #ccc; margin: 0 9px; }
.id { font-size: 14px; letter-spacing: .03px; color: #111; }
.tools { margin-left: auto; margin-right: 9px; display: flex; gap: 16px; align-items: center; }
.tools svg { width: 16px; height: 16px; overflow: visible; }
.dim { color: #999; } .dimmer { color: #c4c4c4; } .mid { color: #666; margin-left: -2.500px; }
.tools .first { margin-left: 9.500px; }
.active-tool { position: relative; }
.active-tool b { position: absolute; left: 0; right: 0; top: 0; text-align: center; font: 400 11px/14px "Noto Sans"; }
.active-tool::before { content: ""; position: absolute; left: -6px; right: -6px; bottom: -7px; height: 2px; background: #ef4438; }
.active-tool::after { content: ""; position: absolute; left: 6.500px; bottom: -4px; width: 3px; height: 3px; border-radius: 50%; background: #ef4438; }
.burger { width: 16px; height: 16px; margin-top: -1px; }

/* remote desktop canvas */
.remote { flex: 1; padding: 91px 0 0 447px; background: linear-gradient(#808080 0, #808080 855px, #626262 952px); }
.desktop { width: 1026px; height: 770px; border: 1px solid #333; display: flex; flex-direction: column; overflow: hidden; }
.sq16 { width: 16px; height: 16px; } .sq14 { width: 14px; height: 14px; } .sq8 { width: 9px; height: 9px; } .sq9 { width: 9px; height: 9px; }

.tabstrip { height: 32px; flex: none; background: #ced1c8; display: flex; align-items: center; font-size: 11.500px; }
.tab-actions { width: 47px; padding-left: 17px; }
.tab { width: 238px; height: 32px; display: flex; align-items: center; white-space: nowrap; gap: 10px; padding: 0 11px 0 10px; }
.tab span { padding-bottom: 2px; }
.tab .sq8 { margin-left: auto; }
.tab.active { width: 240px; background: #f6f9f2; border-radius: 5px 5px 0 0; box-shadow: 0 0 2px #999; padding: 0 12px 0 11px; }
.t1 { letter-spacing: -.13px; } .t2 { letter-spacing: -.07px; }
.tab-sep { width: 1px; height: 20px; background: #8a8d86; }
.tab-new { margin-left: 10px; }
.edge-btns { margin: 0 18px 0 auto; display: flex; gap: 36px; }
.edge-btns svg { width: 10px; height: 10px; }

.navbar { height: 38px; flex: none; background: #f6f9f2; display: flex; align-items: center; }
.nav-back { margin-left: 20px; } .nav-fwd { margin-left: 28px; color: #c4c7c1; } .nav-reload { margin-left: 28px; }
.omnibox { margin-left: 20px; width: 688px; height: 30px; background: #fffff8; border-radius: 4px; display: flex; align-items: center; padding-left: 18px; box-shadow: 0 0 1px #ddd; color: #6b6e6c; }
.warn { width: 16px; height: 15px; }
.insecure { width: 87px; flex: none; padding-left: 8px; font-size: 13.200px; letter-spacing: 0; white-space: nowrap; }
.omni-sep { width: 1px; flex: none; height: 16px; background: #888; }
.url { margin-left: 13px; font-size: 13.200px; letter-spacing: .06px; color: #7b7c84; white-space: nowrap; }
.url b { font-weight: 400; color: #14141c; }
.omni-icons { margin: 0 14px 0 auto; display: flex; gap: 19.500px; color: #6b6e6c; }
.omni-icons svg, .nav-icons svg { width: 16px; height: 16px; }
.omni-icons .w17, .nav-icons .w17 { width: 17px; height: 17px; }
.nav-icons { margin-left: 19px; display: flex; align-items: center; }
.nav-icons .w17 + .w17 { margin-left: 27px; }
.nav-icons .avatar { width: 22px; height: 22px; margin-left: 27px; }
.nav-icons .dots { width: 14px; height: 4px; margin-left: 28px; }

.page-row { height: 658px; flex: none; display: flex; background: #f6f9f2; overflow: hidden; }
.grafana { width: 978px; border: 1px solid #b3bcb8; border-width: 1px 1px 0 0; background: #eefafa; display: flex; overflow: hidden; }
.g-side { width: 24px; flex: none; background: #fffff8; border-right: 1px solid #dbe9e9; display: flex; flex-direction: column; align-items: center; color: #46555a; }
.g-side svg { width: 11px; height: 11px; }
.g-side .g-logo { width: 13px; height: 14px; margin: 5px 0 0 1px; }
.g-items, .g-bottom { display: flex; flex-direction: column; width: 23px; }
.g-items { margin-top: 25px; } .g-bottom { margin-top: auto; margin-bottom: 4px; }
.g-side span { height: 24px; display: flex; align-items: center; justify-content: center; }
.g-side .thin { width: 9px; height: 9px; }
.g-side .on { color: #1f2c30; border-left: 2px solid #f2643c; padding: 0 2px 0 0; }
.g-side .g-ava { width: 12px; height: 12px; }
.g-main { flex: 1; padding: 0 8px; min-width: 0; }
.g-head { height: 31px; display: flex; align-items: center; color: #33404a; }
.crumb { font: 8.800px/10px Roboto, sans-serif; margin: 0 4px 0 4px; width: 94px; white-space: nowrap; letter-spacing: .04px; }
.g-star { margin-right: 8px; }
.g-tools { margin-left: auto; display: flex; color: #4d5a60; }
.gb { height: 16px; border: 1px solid #d8e6e7; background: #fffff8; display: flex; align-items: center; justify-content: center; margin-left: 4.600px; }
.gb svg { width: 8px; height: 8px; }
.gb .bars { width: 13px; height: 9px; }
.w21 { width: 22px; } .w18 { width: 18px; }
.gb > span { display: flex; align-items: center; justify-content: center; height: 14px; flex: none; }
.gb > span + span { border-left: 1px solid #d8e6e7; }
.c14 { width: 14px; } .c18 { width: 17px; } .c16 { width: 17px; }
.gb .time { width: 179px; gap: 4px; }
.gb em { font: 7.100px/10px Roboto, sans-serif; color: #1f2a38; white-space: nowrap; width: 146px; letter-spacing: .05px; }
.gb .arrow { width: 4px; height: 6px; } .gb .down { width: 5px; height: 4px; }
.row-title { height: 20px; display: flex; align-items: center; gap: 2px; padding: 0 0 3px 1px; font: 8px/12px "Noto Sans CJK JP", sans-serif; color: #27333c; }
.row-title svg { width: 5px; height: 4px; }
.second { height: 23px; padding-bottom: 0; }
.row { display: flex; gap: 4px; }
.panel { border: 1px solid #d8e9ea; background: #fffff8; display: flex; flex-direction: column; }
.r1 .panel { height: 130px; } .r1, .r2 { margin-bottom: 3px; }
.r2 .panel { height: 73px; }
.r3 .panel { height: 205px; }
.half { width: 466.500px; } .full { width: 937px; }
.ph { position: relative; height: 16px; flex: none; text-align: center; font: 6.800px/15px "Noto Sans CJK JP", sans-serif; color: #5d6074; }
.ph.big { font-size: 7px; color: #4a4d60; } .ph.teal { font-size: 6.900px; color: #5b7480; }
.ph i { position: absolute; left: 3px; top: 0; font: 700 5px/9px Roboto; color: #6b7b80; }
.tiles { flex: 1; display: flex; gap: 2px; }
.tile { flex: 1; border-radius: 1px; color: #fbfff6; font-family: Roboto, "Noto Sans CJK JP", sans-serif; box-shadow: inset 0 -1px 1px rgba(60, 60, 60, .25), inset -1px 0 1px rgba(60, 60, 60, .2); display: flex; flex-direction: column; min-width: 0; white-space: nowrap; }
.tl { display: block; } .tv { display: block; font-weight: 500; }
.green { background: linear-gradient(120deg, #6cc36a 30%, #63b85d 33% 77%, #6ab753 78%); padding: 6px 0 0 7px; }
.green .tl { font-size: 13px; line-height: 16px; }
.green .tv { font-size: 69px; line-height: 70px; font-weight: 700; margin: 7px 0 0 -3px; }
.red { background: linear-gradient(120deg, #ee545c 10%, #e6565b 12% 36%, #f04f63 38% 62%, #dc4665 64% 86%, #e63b70 88%); padding: 28px 0 0 6px; }
.red .tl { font-size: 13px; line-height: 16px; }
.red .tv { font-size: 33px; line-height: 38px; letter-spacing: .1px; margin-top: 1px; -webkit-text-stroke: .6px; }
.lime { background: linear-gradient(120deg, #8ad384 50%, #83c97c 52% 76%, #8bc974 78%); padding: 7px 0 0 6px; }
.orange { background: linear-gradient(120deg, #ffc562 8%, #ffb35b 14% 42%, #ff9f54 46% 62%, #ff9742 66% 84%, #ff8747 88%); padding: 7px 0 0 5px; }
.lime .tl, .orange .tl { font-size: 7px; line-height: 10px; }
.lime .tv, .orange .tv { font-size: 25.500px; line-height: 30px; font-weight: 700; letter-spacing: -.3px; }
.lime small, .orange small { font-size: 16px; font-weight: 500; margin-left: 4px; letter-spacing: -.5px; -webkit-text-stroke: .2px; }
.chart { width: 935px; height: 175px; font: 6px Roboto, sans-serif; fill: #1f3a40; }
.gl { stroke: #cdd6cd; fill: none; }
.chart text { stroke: #1f3a40; stroke-width: .15px; }
.legend { display: flex; padding: 0 0 0 12px; font: 6px/8px Roboto, sans-serif; color: #1f3a40; }
.legend span { display: flex; align-items: center; gap: 4px; width: 39.300px; }
.legend i { width: 7px; height: 2px; }

.control { width: 624px; height: 180px; } .sensors { width: 309px; height: 180px; }
.frame { margin: 4px 4px 0; height: 160px; border: 1px solid #8a8f8a; border-right-color: #ddd; display: flex; color: #222; overflow: hidden; }
.menu { width: 101px; padding: 4px 0 0 12px; flex: none; font: 8px/24px "Noto Sans CJK JP", sans-serif; color: #444; }
.menu div { display: flex; align-items: center; gap: 5px; height: 24px; }
.menu svg { width: 10px; height: 10px; color: #111; }
.menu .cur { border-right: 2px solid #8a8f8a; color: #777; }
.groups { display: flex; margin-left: 14px; font-family: Roboto, "Noto Sans CJK JP", sans-serif; }
.group { width: 162px; flex: none; }
.group h4 { margin: 10px 0 0 6.500px; font-weight: 400; font-size: 8.900px; line-height: 13px; }
.pair { display: flex; }
.in { margin: 11px 0 0 7px; gap: 8px; }
.in label { width: 69px; height: 10px; border-bottom: 1px solid #ddd; font-size: 8px; line-height: 9px; color: #9a9c94; white-space: nowrap; }
.in sup { font-size: 5px; line-height: 0; }
.btn { margin: 9px 0 0 7px; gap: 8px; }
.btn button { width: 69px; height: 21px; border-radius: 1px; box-shadow: 0 1px 2px #bbb; font-size: 7px; line-height: 19px; color: #444; }
.val { margin-top: 12px; gap: 5px; text-align: center; font-size: 8px; color: #555; line-height: 11px; }
.val div { width: 76px; }
.val b { display: block; color: #222; font: 700 7.500px/9px "Liberation Sans"; }
.sw { margin-top: 5px; gap: 3px; }
.sw button { width: 78px; height: 24px; border-radius: 1px; color: #fff; font: 500 7px/24px Roboto; box-shadow: 0 1px 1px #aaa; }
.on { background: #008700; } .off { background: #f80000; }
.g-side .on { background: none; }
.st { text-align: center; font: 7.500px/8px "Liberation Sans"; color: #666; margin-top: 4px; padding-right: 5px; }
.sgrid { display: grid; grid-template-columns: 1fr 1fr; grid-template-rows: 112px 112px; gap: 2px; }
.yellow { color: #221e22; padding: 5px 0 0 6px; background: linear-gradient(120deg, #f4f13b 10%, #e9ec33 22%, #fbe134 24% 30%, #f3df38 33%, #f6da28 42% 55%, #f7c92e 58% 72%, #f8c21a 75% 88%, #fbb324 92%); }
.yellow .tl { font-size: 14px; line-height: 16px; color: #4c4622; font-weight: 400; }
.yellow .tv { font-size: 70px; line-height: 74px; margin: 7px 0 0 -1px; -webkit-text-stroke: .4px; }
.yellow small { font-size: 41px; margin-left: 10px; font-weight: 500; letter-spacing: -1.500px; -webkit-text-stroke: 0; }

.edge-side { width: 46px; display: flex; flex-direction: column; padding-top: 2px; }
.edge-side span { height: 42px; display: flex; align-items: center; justify-content: center; }
.edge-side svg { width: 16px; height: 16px; }
.edge-side .w18i { width: 18px; } .edge-side .tall { height: 19px; } .edge-side .p12 { width: 12px; height: 12px; }
.edge-side .add { height: 48px; }
.side-end { margin: auto 9px 1px; border-top: 1px solid #b5b8b1; padding-top: 3px; }
.edge-side .blk { color: #222; }

/* remote taskbar */
.tb10 { height: 40px; flex: none; display: flex; justify-content: space-between; background: linear-gradient(90deg, #1f343b 0, #20363e 160px, #2d4047 230px, #35444a 290px, #45473e 370px, #43453b 880px, #3a4145 910px, #433d4c 950px, #3a3b58 1000px, #3a3550 1024px); color: #fffffa; }
.tb-items { display: flex; }
.tb-items span { width: 49px; height: 40px; display: flex; align-items: center; justify-content: center; }
.tb-items span:first-child { width: 48px; margin-right: 3px; }
.tb-items svg { width: 24px; height: 24px; }
.tb-items .sq16 { width: 16px; height: 16px; } .tb-items .f22 { width: 22px; height: 22px; }
.tb-items .sel { width: 48px; background: #485d63; box-shadow: inset 0 -2px #76b9ed; }
.tb-items .run { background: linear-gradient(#76b9ed, #76b9ed) 50% 100% / 40px 2px no-repeat; }
.prompt { font: 6px "Liberation Mono"; fill: #fff; }
.hs { font: 700 11.500px "Open Sans"; text-anchor: middle; fill: #111; stroke: #fff; stroke-width: 2px; paint-order: stroke; letter-spacing: -.5px; }
.tb-tray { display: flex; align-items: center; }
.c12 { width: 12px; height: 8px; }
.c14s { width: 14px; height: 16px; margin-left: 11px; }
.tb-tray .sq16 { margin-left: 8px; }
.lang { font-size: 11.500px; line-height: 18px; margin-left: 10px; width: 28px; letter-spacing: 0; }
.dt { font-size: 11.500px; line-height: 18px; text-align: center; width: 64px; margin-left: 6px; letter-spacing: -.25px; white-space: nowrap; }
.notif { position: relative; width: 26px; margin-left: 15px; }
.tb-tray .notif .sq16 { margin-left: 0; }
.notif b { position: absolute; left: 7px; top: 7px; width: 16px; height: 16px; border-radius: 50%; background: #45424f; border: 1px solid #888; font: 10.500px/14px "Noto Sans"; text-align: center; }
.peek { width: 1px; height: 40px; background: #77748a; margin: 0 4px 0 10px; }

/* host taskbar */
.tb11 { position: relative; height: 48px; flex: none; border-top: 1px solid #3c5878; color: #f4f8ff; background: linear-gradient(90deg, #0e3a76 0, #0e3b7a 350px, #0e429c 405px, #1448a0 440px, #2a589e 480px, #3a66a0 560px, #34609c 600px, #1a4380 650px, #123c73 720px, #123a72 1100px, #153f7c 1300px, #0f3b80 1700px, #103873 1920px); display: flex; align-items: center; }
.dock { display: flex; margin-left: 608.500px; }
.dock span { position: relative; width: 44.060px; height: 47px; display: flex; align-items: center; justify-content: center; padding-bottom: 1px; }
.dock svg { width: 24px; height: 24px; }
.dock .s22 { width: 22px; height: 22px; }
.dock .chrome { width: 26px; height: 28px; margin: -3px 0 0 2px; }
.dock .face { position: absolute; left: 23px; top: 6px; width: 16px; height: 16px; }
.dock .run::after { content: ""; position: absolute; left: 19px; bottom: 5px; width: 6px; height: 3px; border-radius: 2px; background: #a9b6ca; }
.dock b { position: absolute; left: 24px; top: 6px; width: 14px; height: 14px; border-radius: 50%; background: #e85b5b; font: 10px/13px "Noto Sans"; text-align: center; letter-spacing: -.5px; }
.tray11 { margin-left: auto; margin-right: 20px; display: flex; align-items: center; padding-bottom: 1px; }
.cl { width: 16px; height: 11px; margin-left: 10px; } .cl2 { margin-left: 8px; }
.mic { width: 12px; height: 16px; margin-left: 14px; color: #7cc4d8; }
.wifi { width: 16px; height: 13px; margin-left: 18px; }
.v11 { width: 17px; height: 15px; margin-left: 8px; }
.clock11 { width: 72px; text-align: right; font-size: 11.500px; line-height: 16px; letter-spacing: -.42px; white-space: nowrap; }
.count { width: 16px; height: 16px; margin-left: 11px; border-radius: 50%; background: #4cc2ff; color: #111; font: 10px/16px "Noto Sans"; text-align: center; }
```
